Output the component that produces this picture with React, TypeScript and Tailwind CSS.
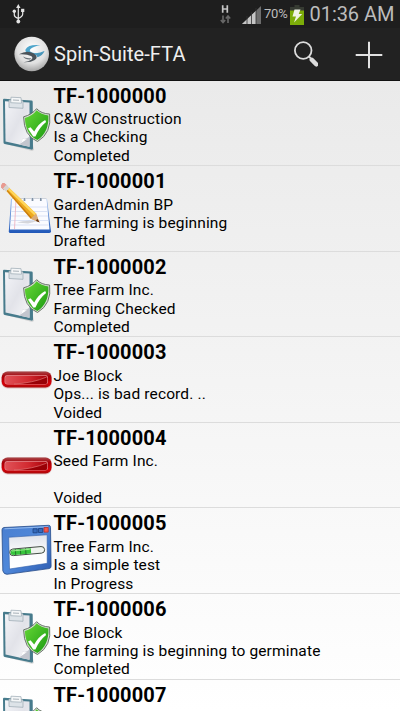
import React from 'react';

type Kind = 'check' | 'draft' | 'void' | 'progress';
type Row = { id: string; partner: string; note: string; status: string; kind: Kind };

const rows: Row[] = [
  { id: 'TF-1000000', partner: 'C&W Construction', note: 'Is a Checking', status: 'Completed', kind: 'check' },
  { id: 'TF-1000001', partner: 'GardenAdmin BP', note: 'The farming is beginning', status: 'Drafted', kind: 'draft' },
  { id: 'TF-1000002', partner: 'Tree Farm Inc.', note: 'Farming Checked', status: 'Completed', kind: 'check' },
  { id: 'TF-1000003', partner: 'Joe Block', note: 'Ops... is bad record. ..', status: 'Voided', kind: 'void' },
  { id: 'TF-1000004', partner: 'Seed Farm Inc.', note: '', status: 'Voided', kind: 'void' },
  { id: 'TF-1000005', partner: 'Tree Farm Inc.', note: 'Is a simple test', status: 'In Progress', kind: 'progress' },
  { id: 'TF-1000006', partner: 'Joe Block', note: 'The farming is beginning to germinate', status: 'Completed', kind: 'check' },
  { id: 'TF-1000007', partner: '', note: '', status: '', kind: 'check' },
];

// Gradients shared by every row icon.
function Defs() {
  return (
    <svg className="absolute h-0 w-0" aria-hidden="true">
      <defs>
        <linearGradient id="paper" x1="0" y1="0" x2="1" y2="1">
          <stop offset="0" stopColor="#f3f4f8" />
          <stop offset=".5" stopColor="#e2e3e9" />
          <stop offset="1" stopColor="#f8f8fa" />
        </linearGradient>
        <linearGradient id="shield" x1="0" y1="0" x2="1" y2="1">
          <stop offset="0" stopColor="#67d836" />
          <stop offset="1" stopColor="#1b9a12" />
        </linearGradient>
        <linearGradient id="redRim" x1="0" y1="0" x2="0" y2="1">
          <stop offset="0" stopColor="#a84a4c" />
          <stop offset=".3" stopColor="#a80008" />
          <stop offset=".75" stopColor="#d80008" />
          <stop offset="1" stopColor="#a80a0c" />
        </linearGradient>
        <linearGradient id="redFace" x1="0" y1="0" x2="1" y2="0">
          <stop offset="0" stopColor="#e05258" />
          <stop offset=".55" stopColor="#d22a30" />
          <stop offset="1" stopColor="#a80008" />
        </linearGradient>
        <linearGradient id="windowBlue" x1="0" y1="0" x2="1" y2="1">
          <stop offset="0" stopColor="#4a7fd0" />
          <stop offset=".5" stopColor="#4f88da" />
          <stop offset="1" stopColor="#2c5ab0" />
        </linearGradient>
        <linearGradient id="windowPane" x1="0" y1="0" x2="0" y2="1">
          <stop offset="0" stopColor="#dfe2ea" />
          <stop offset=".5" stopColor="#fbfbfd" />
          <stop offset="1" stopColor="#ffffff" />
        </linearGradient>
        <linearGradient id="pad" x1="0" y1="0" x2="0" y2="1">
          <stop offset="0" stopColor="#9dbff0" />
          <stop offset="1" stopColor="#1f57b8" />
        </linearGradient>
        <radialGradient id="ball" cx=".5" cy=".35" r=".65">
          <stop offset="0" stopColor="#ffffff" />
          <stop offset=".65" stopColor="#e0e0e0" />
          <stop offset="1" stopColor="#a5a5a5" />
        </radialGradient>
      </defs>
    </svg>
  );
}

function CheckIcon() {
  return (
    <>
      <path d="M4 62.500l28 7.500 2-1-1-5z" fill="#000" opacity=".12" />
      <path d="M4 17.800L31.500 19.500q1.200.1 1.200 1.300l.3 46.500q0 1.600-1.600 1.300L4.700 63Q3.500 62.700 3.500 61.500L3 19Q3 17.800 4 17.800z" fill="#477b8c" />
      <path d="M5 20.200l24.500 1.300V65.800L5.500 60.500z" fill="url(#paper)" />
      <path d="M19 63.500q3-1.500 3.500-6 3.500 1.500 7-2V65.800z" fill="#c3c6ce" />
      <path d="M19 63.500q3-1.500 3.500-6 2.500 1.500 5 .2z" fill="#fff" />
      <path d="M9 19l14 .8v7.500l-14-.8z" fill="#dde3e8" stroke="#98a6b0" strokeWidth=".7" />
      <path d="M11 16.200l10 .5.500 5.500-10.800-.5z" fill="#f5f7f8" stroke="#9aa8b1" strokeWidth=".7" />
      <path d="M13 19l6 .3" stroke="#a8b1b8" />
      <path d="M36.600 27.700q4.600 5 13 5.300Q52 52 37.500 60.500 23.800 55 23.600 35.800q8-2 13-8.100z" fill="#d5ddd2" stroke="#5d6b5d" strokeWidth=".9" />
      <path d="M36.700 29.300q4.500 4.500 11.700 5.100.8 16.600-11 24.600Q25.400 53.200 24.900 36.900q7.200-1.600 11.800-7.600z" fill="url(#shield)" />
      <path d="M28 47.500l2.500-1.300 3.700 4.400q4.300-8 11-11.500l.9 1.800q-6.900 5.500-10.700 14.500h-2.200z" fill="#fff" />
    </>
  );
}

function DraftIcon() {
  return (
    <>
      <path d="M11 33h36L51 65.500q-.2 1.500-2 1.500H10.500Q8.700 67 8.800 65.500z" fill="url(#pad)" />
      <path d="M12 32.500h34.500l3 31H9.900z" fill="#fafbff" />
      <path d="M12 32.500h34.500" stroke="#b5bcc8" strokeWidth=".6" />
      <path d="M11.500 41h35.700M11.200 45.500h36.300M10.900 50h37M10.500 54.500h37.800M10.200 59h38.500" stroke="#d2dcf1" strokeWidth=".8" />
      <path d="M16 33l-1.500 30" stroke="#efacba" strokeWidth=".8" />
      <path d="M24.500 35v-7M32.500 35v-7M40.800 35v-7" stroke="#e9edf1" strokeWidth="2.400" />
      <path d="M24.500 35v-3M32.500 35v-3M40.800 35v-3" stroke="#7e8fa3" strokeWidth="1.600" />
      <path d="M17 56.500q8-2.500 20-1.200l-9 2.200z" fill="#8b8f98" opacity=".35" />
      <path d="M9 21.800L36 47.500l3.200 8.500-8.400-3.300L6.300 25z" fill="#edaa1f" />
      <path d="M9 21.800L36.200 47.700l-1.900 1.500L7.800 23.700z" fill="#ffd65b" />
      <path d="M6.800 24.700L30.800 52.700l1-1.100L7.300 24z" fill="#c97c13" />
      <path d="M36 47.500l3.500 8.800-8.900-3.500 2-1.800z" fill="#d9ac7c" />
      <path d="M37.200 52.700l2.500 3.700-3.800-1.300z" fill="#5c2e14" />
      <path d="M1.300 19.500q.5-2.800 3.200-2.300L7.500 20l-3.700 4.300L1.300 21.500z" fill="#dd8b83" />
      <path d="M6 18.500l3.500 3.300-3.500 3.700-3.300-3z" fill="#d6d4d0" />
      <path d="M1.300 19.500q.5-2.800 3.200-2.300l1.700 1.600-3.800 4-1.100-1.300z" fill="#e99a90" />
    </>
  );
}

function VoidIcon() {
  return (
    <g transform="translate(0 3)">
      <rect x="1.200" y="31.300" width="50.800" height="17.200" rx="6.500" fill="#c88b8b" opacity=".5" />
      <rect x="1.700" y="31.500" width="49.800" height="16" rx="6" fill="url(#redRim)" />
      <rect x="4.500" y="35" width="43.500" height="9.500" rx="3" fill="#e0868a" />
      <rect x="5.200" y="35.700" width="42.100" height="8.200" rx="2.500" fill="url(#redFace)" />
      <path d="M14 44q19-1 32.700-7v5.500q0 1.500-1.500 1.500z" fill="#990006" />
      <path d="M14 44q19-1 32.700-7" fill="none" stroke="#e88485" strokeWidth=".6" />
    </g>
  );
}

function ProgressIcon() {
  return (
    <>
      <path d="M4 19.500L48.500 17.300q2 0 2 2l.6 39q0 2-2 2.300L7 66.300q-3 .2-4.200-3.500L2 21.800q0-2 2-2.300z" fill="url(#windowBlue)" stroke="#264b89" strokeWidth=".8" />
      <path d="M4.500 20.800L48 18.700" stroke="#a5c8f5" strokeWidth=".8" />
      <path d="M8.700 29.300l38.500-2.500v28.500L9.500 61z" fill="url(#windowPane)" stroke="#2f5ca8" strokeWidth=".6" />
      <path d="M33 20.800h4.200v4H33zM38.500 20.500h4.200v4h-4.200z" fill="#346abb" stroke="#1c407e" strokeWidth=".8" />
      <path d="M44 19.500h4.200v4.600H44z" fill="#f3594b" stroke="#b82e2f" strokeWidth=".8" />
      <g transform="translate(0 1.300) rotate(-5 27 42)">
        <rect x="9.700" y="38.500" width="35" height="6.600" rx="3.300" fill="#eef2ee" stroke="#374139" strokeWidth=".9" />
        <path d="M12.800 39.200H31v5.300H12.800q-2.300-.3-2.300-2.600t2.300-2.700z" fill="#38c53c" />
        <path d="M15.500 39v5.700M20.500 39v5.700M25.800 39v5.700" stroke="#23752a" />
        <path d="M12 40.300h18" stroke="#9cec8e" />
      </g>
    </>
  );
}

function RowIcon({ kind }: { kind: Kind }) {
  return (
    <svg viewBox="0 0 54 85.500" className="h-[85.5px] w-[54px] shrink-0">
      {kind === 'check' && <CheckIcon />}
      {kind === 'draft' && <DraftIcon />}
      {kind === 'void' && <VoidIcon />}
      {kind === 'progress' && <ProgressIcon />}
    </svg>
  );
}

function StatusBar() {
  return (
    <div className="flex h-7 shrink-0 items-center bg-[#1e1e1e] text-[#bcbcbc]">
      <svg viewBox="0 0 14 20" className="ml-3 h-5 w-3.5" fill="none" stroke="#e4e4e4" strokeWidth="1.200">
        <path d="M6.300 3v14M2.300 7v4q0 2 4 3.500M10.700 6v4q0 2.500-4.400 4.500" />
        <path d="M6.300 0L8.500 4H4.100z" fill="#e4e4e4" stroke="none" />
        <circle cx="6.300" cy="17.500" r="1.900" fill="#e4e4e4" stroke="none" />
        <circle cx="2.300" cy="7.300" r="1.700" fill="#e4e4e4" stroke="none" />
        <path d="M9.100 4.800h3.200V8H9.100z" fill="#e4e4e4" stroke="none" />
      </svg>
      <svg viewBox="0 0 14 22" className="ml-[193px] h-[22px] w-3.5">
        <path d="M3.700 2.300v7.500M8.300 2.300v7.500M3.700 6h4.600" stroke="#c5c5c5" strokeWidth="1.700" />
        <path d="M4 12.500v7M1.800 17L4 19.500 6.200 17M9 20v-7M6.800 15.500L9 13l2.200 2.500" fill="none" stroke="#686868" strokeWidth="1.600" />
      </svg>
      <svg viewBox="0 0 20 20" className="ml-[9px] h-5 w-5">
        <path d="M0 20L19 2v18z" fill="#6d6d6d" />
        <path d="M0 20L14 6.700V20z" fill="#c5c5c5" />
        <path d="M5 12v8M9.500 8v12M14 4v16" stroke="#303030" strokeWidth=".8" />
      </svg>
      <span className="ml-[2px] w-[25px] whitespace-nowrap text-[13px] leading-7 tracking-[-0.2px]">70%</span>
      <svg viewBox="0 0 14 21" className="ml-px mt-px h-[21px] w-3.5 shrink-0">
        <path d="M4.500 1h5v2H14v6H0V3h4.500z" fill="#363b32" />
        <path d="M0 6.500h14V21H0z" fill="#7cad09" />
        <path d="M4.500 5.500h6L8.700 10h3.500L4 18.500l2-6H2.500z" fill="#f0f3e5" />
      </svg>
      <span className="ml-[5.5px] whitespace-nowrap text-[20px] leading-7 tracking-[-0.05px]">01:36 AM</span>
    </div>
  );
}

function ActionBar() {
  return (
    <div className="flex h-[52.5px] shrink-0 items-center border-b border-b-[#111] bg-[#222] pl-3.5">
      <svg viewBox="0 0 36 36" className="h-9 w-9">
        <circle cx="17.700" cy="18" r="17.300" fill="url(#ball)" />
        <path d="M26.500 9.300Q14.500 8 11.500 13.500q-.8 2.500 3.500 4.500 9 3 15.500-3-7 3.300-12.500 1.500-3.500-1.500-1.500-3.500 3-2.800 10-3.700z" fill="#4ea5cb" />
        <path d="M5 18.300q8-4.800 15-.8 5 3.500.8 6.500-4 2.700-11.300 2.300 5.500-.8 8-2.800 2-2-.5-3.500-4-2.200-12-1.700z" fill="#4b5359" />
        <path d="M30.500 15q-2 5-7 6.200-1-2.500-3.500-3.700 6 .5 10.500-2.500z" fill="#4a95b8" />
        <path d="M9 20.500q4 2.500 8.500 1.500l-1.500 1.500q-5 .3-7-3z" fill="#6b7379" />
      </svg>
      <h1 className="ml-1 w-[236px] whitespace-nowrap text-[20px] font-normal leading-[54px] tracking-[0.08px] text-[#efefef]">Spin-Suite-FTA</h1>
      <svg viewBox="0 0 28 28" className="mt-0.5 h-7 w-7" fill="none" stroke="#dcdcdc">
        <circle cx="13.200" cy="9.500" r="8.300" strokeWidth="1.800" />
        <path d="M18.800 15.400l2 2" strokeWidth="2" />
        <path d="M21.800 18.800l4.400 4.500" strokeWidth="4.500" strokeLinecap="round" />
      </svg>
      <svg viewBox="0 0 28 28" className="ml-[37px] mt-0.5 h-7 w-7">
        <path d="M14 .7v26.600M.7 14h26.600" stroke="#e2e2e2" strokeWidth="2" />
      </svg>
    </div>
  );
}

export default function App() {
  return (
    <main className="flex h-[711px] w-[400px] flex-col overflow-hidden bg-[#1e1e1e] font-[Roboto,sans-serif]">
      <Defs />
      <StatusBar />
      <ActionBar />
      <section className="min-h-0 flex-1 overflow-hidden bg-linear-to-b from-[#eaeaea] to-white">
        {rows.map((row) => (
          <article key={row.id} className="flex h-[85.6px] overflow-hidden border-b border-[#dcdcdc] text-black">
            <RowIcon kind={row.kind} />
            <div className="-ml-[0.5px] whitespace-nowrap">
              <h2 className="h-[29.5px] text-[20px] font-bold leading-[30px] tracking-[0.15px]">{row.id}</h2>
              <p className="h-[18.4px] text-[15.5px] leading-[18.4px] tracking-[0.14px]">{row.partner}</p>
              <p className="h-[18.4px] text-[15.5px] leading-[18.4px] tracking-[0.14px]">{row.note}</p>
              <p className="h-[18.4px] text-[15.5px] leading-[18.4px] tracking-[0.14px]">{row.status}</p>
            </div>
          </article>
        ))}
      </section>
    </main>
  );
}
